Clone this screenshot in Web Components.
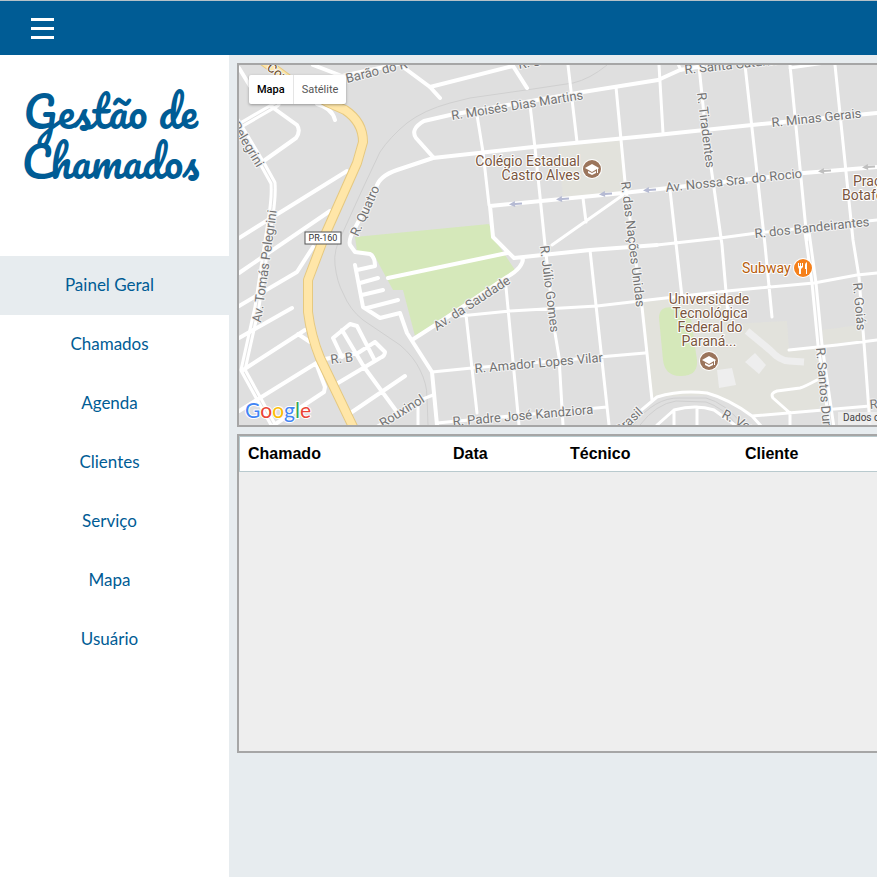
<!DOCTYPE html>
<html lang="pt-BR">
<head>
<meta charset="utf-8">
<title>Gestão de Chamados</title>
<style>
  html, body { margin: 0; height: 100%; }
  body { background: #e7ecef; font-family: Lato, "Liberation Sans", sans-serif; color: #005c95; }
</style>
</head>
<body>
<app-shell>
  <top-bar slot="bar"></top-bar>
  <side-menu slot="menu">
    <menu-item active>Painel Geral</menu-item>
    <menu-item>Chamados</menu-item>
    <menu-item>Agenda</menu-item>
    <menu-item>Clientes</menu-item>
    <menu-item>Serviço</menu-item>
    <menu-item>Mapa</menu-item>
    <menu-item>Usuário</menu-item>
  </side-menu>
  <street-map></street-map>
  <ticket-table></ticket-table>
</app-shell>

<template id="t-shell">
  <style>
    :host { display: grid; grid-template: auto 1fr / 229px minmax(0, 1fr); min-height: 100vh; }
    header { grid-column: 1 / -1; }
    main { display: flex; flex-direction: column; gap: 7px; padding: 8px 0 0 8px; }
  </style>
  <header><slot name="bar"></slot></header>
  <slot name="menu"></slot>
  <main><slot></slot></main>
</template>

<template id="t-bar">
  <style>
    :host { display: flex; align-items: center; height: 54px; padding-left: 31px; background: #005c95; border-top: 1px solid #b4c1c8; }
    button { display: flex; padding: 0; border: 0; background: none; cursor: pointer; }
  </style>
  <button type="button" aria-label="Abrir menu">
    <svg width="23" height="21" viewBox="0 0 23 21" fill="#fff"><path d="M0 0h23v3H0zM0 9h23v3H0zM0 18h23v3H0z"/></svg>
  </button>
</template>

<template id="t-menu">
  <style>
    :host { display: block; background: #fff; }
    h1 { box-sizing: border-box; height: 201px; margin: 0; padding: 31px 8px 0 0; text-align: center;
         font: 400 42px/50px Pacifico, Lato, cursive; color: #005c95; }
    nav { display: flex; flex-direction: column; }
  </style>
  <h1>Gestão de<br>Chamados</h1>
  <nav><slot></slot></nav>
</template>

<template id="t-item">
  <style>
    :host { display: block; }
    :host([active]) { background: #e7ecef; }
    a { display: block; padding: 0 10px 1px 0; text-align: center; text-decoration: none; color: #005c95; font-size: 17px; line-height: 58px; }
  </style>
  <a href="#"><slot></slot></a>
</template>

<template id="t-table">
  <style>
    :host { display: block; height: 315px; overflow: hidden; background: #eee; border: 2px solid #a6a6a6; border-right: 0; }
    table { width: 100%; border-collapse: collapse; table-layout: fixed; background: #fff; border: 1px solid #b9cace; border-right: 0; }
    th { padding: 8px; text-align: left; font: 700 16px/18px "Liberation Sans", Arial, sans-serif; color: #000; }
    .ticket { width: 189px; } .date { width: 101px; } .tech { width: 159px; }
  </style>
  <table>
    <thead><tr>
      <th class="ticket" scope="col">Chamado</th><th class="date" scope="col">Data</th>
      <th class="tech" scope="col">Técnico</th><th scope="col">Cliente</th>
    </tr></thead>
  </table>
</template>

<template id="t-map">
  <style>
    :host { display: block; position: relative; overflow: hidden; height: 360px; background: #dfdfdf; border: 2px solid #a6a6a6; border-right: 0; font-family: Roboto, sans-serif; }
    svg.map { display: block; width: 100%; height: 100%; }
    .switch { position: absolute; left: 10px; top: 10px; display: flex; background: #fff; border-radius: 2px; box-shadow: 0 1px 3px #0005; }
    button { height: 29px; padding: 0 8px; border: 0; background: none; font: 11px/29px Roboto, sans-serif; color: #565656; }
    button.on { font-weight: 500; color: #000; }
    button + button { border-left: 1px solid #e5e5e5; }
    .road { fill: none; stroke: #fff; stroke-width: 3; stroke-linejoin: round; stroke-linecap: round; }
    .wide { stroke-width: 4; }
    .avenue { stroke-width: 7; }
    .median { fill: none; stroke: #e2e2e2; stroke-width: 1; }
    .rail { fill: none; stroke: #d0d0d0; stroke-width: 1; }
    text { font-size: 13px; fill: #737373; stroke: #f3f3f3; stroke-width: 2px; stroke-linejoin: round; paint-order: stroke; }
    .poi text { font-size: 14px; fill: #7a5640; stroke: #fff; }
    .poi .food { fill: #b85d0c; }
    .logo text { font: 400 21px Lato, sans-serif; stroke: #fff; stroke-width: 2px; }
  </style>
  <svg class="map" role="img" aria-label="Mapa de ruas">
    <defs>
      <g id="cap"><circle r="10" fill="#fff"/><circle r="9" fill="#9b755c"/><path fill="#fff" d="M-7-1 0-5 7-1 6 0V4H5V0L0 3zM-4 2 0 4 4 2v2L0 6-4 4z"/></g>
      <path id="arrow" d="M-6 0 0-3v2h7v2H0v2z"/>
    </defs>
    <g transform="translate(-239 -65)">
      <g fill="#e2e2dc">
        <path d="M558 147 621 140 627 192 563 197z"/>
        <path d="M642 302 727 293 730 324 787 321 789 350 819 348 825 408 755 415 715 395 652 397z"/>
        <path d="M822 330 860 325 863 340 824 345z"/>
      </g>
      <path fill="#d5e8ba" d="M355 237 489 224 495 240 515 270 415 336 403 290 393 290 373 253 357 251z"/>
      <path fill="#d5e8ba" d="M659 318C659 307 668 306 675 308L690 312 697 360C698 373 690 376 680 376 669 376 664 369 663 360z"/>
      <g fill="#eee"><path d="M745 362 755 353 766 365 759 374zM717 370 732 368 736 385 719 388z"/><path fill="none" stroke="#eee" stroke-width="7" d="M747 331 770 350Q780 361 789 361L804 362"/></g>
      <path class="rail" d="M607 65Q590 79 573 83L533 89 470 98 450 103Q424 110 407 123 390 137 380 152L363 188 343 232Q333 250 335 265 337 282 343 293 350 310 363 320L400 345Q414 357 420 370 427 384 427 397L428 425"/>
      <path class="rail" d="M640 425Q656 404 676 401L706 402Q722 407 737 425M633 425Q655 397 680 398L706 398Q725 403 743 425"/>
      <path class="road avenue" d="M236 120 263 165 273 183Q274 195 271 215L257 307 243 370 276 430M239 126 277 104"/>
      <path class="median" d="M236 120 263 165 273 183Q274 195 271 215L257 307 243 370 276 430M239 126 277 104"/>
      <path class="road avenue" d="M807 232 814 283 820 345 832 428"/>
      <path class="median" d="M807 232 814 283 820 345 832 428"/>
      <path class="road wide" d="M239 68 250 86M313 65 342 76 403 63M403 67 430 87 440 98M430 87 513 66 527 88M272 107 297 125Q301 131 296 138L265 160M317 104Q332 108 335 120M347 171 239 238M330 211 239 273M313 247Q306 258 297 272L239 306M292 308 239 338M305 330 243 370M298 334 310 342M318 362 239 411M316 363 325 387 324 392 274 425
        M433 157 416 138Q410 129 424 121L450 115 583 92 658 80 680 70 720 63M877 113 752 125 657 135 533 147 433 158 397 170Q379 176 376 188L355 228Q348 240 350 245L355 252 370 254Q375 257 375 266L357 270
        M355 265 363 307 380 318 400 313 407 333 432 372 437 425M360 283 378 278M362 295 383 290M367 308 398 300M388 278 507 253M412 340 440 322 507 277Q523 268 523 258
        M325 359 358 353 375 342M342 357 333 338 350 324 357 326 375 361M342 330 364 367 397 412M375 342 385 352Q385 356 380 358L338 383M405 376 352 412
        M490 206 623 193 804 173 877 167M490 206 493 237 514 258 590 250 657 245"/>
      <path class="road" d="M659 65 663 133M477 115 483 152 489 205M657 245 720 238 757 233 877 220M530 105 535 148 545 245 555 333 559 357 563 425M568 65 577 142M616 87 625 182 642 307 652 400
        M623 195 552 245M583 198 586 222M506 287 519 425M466 315 477 413M590 250 609 425M460 316 510 311 597 306 657 299 727 291 814 283 857 275 877 273M432 372 472 368 645 353M437 423 607 407M418 407V425M376 427 423 399 433 395
        M699 66 705 125 714 188 722 245 728 315M745 65 765 245 772 317M790 65 807 240M835 65 853 240 859 277 864 343 870 425M670 190 682 297M790 68 825 63M676 60 681 70
        M789 350 837 345 877 340M817 380Q804 387 800 388L777 391Q770 393 773 398L790 413V425M752 416 870 406M620 428 657 397Q680 390 707 393 729 399 752 416L762 427M657 425 674 410Q696 404 714 410L735 425M674 410V425M697 407V425"/>
      <g fill="none" stroke-linejoin="round"><path stroke="#e6c980" stroke-width="10" d="M262 60 292 82 327 102 345 110Q363 122 363 142L357 163 325 235 308 280V312Q311 336 320 358L355 431"/><path stroke="#ffe6a8" stroke-width="8" d="M262 60 292 82 327 102 345 110Q363 122 363 142L357 163 325 235 308 280V312Q311 336 320 358L355 431"/></g>
      <g fill="#b5bad3"><use href="#arrow" transform="translate(515 204) rotate(-5)"/><use href="#arrow" transform="translate(562 199) rotate(-5)"/><use href="#arrow" transform="translate(605 194) rotate(-5)"/><use href="#arrow" transform="translate(649 190) rotate(-5)"/></g>
      <g fill="#bfbfbf"><use href="#arrow" transform="translate(824 171) rotate(-5)"/><use href="#arrow" transform="translate(868 167) rotate(-5)"/></g>
      <text style="fill:#6e4a1d" transform="translate(266 69) rotate(38)">Cor</text>
      <text transform="translate(347 83) rotate(-14)">Barão do R</text>
      <text transform="translate(519 69) rotate(-10)">R. S</text>
      <text transform="translate(452 120) rotate(-9)">R. Moisés Dias Martins</text>
      <text transform="translate(685 74) rotate(-6)">R. Santa Catarina</text>
      <text transform="translate(772 127) rotate(-6)">R. Minas Gerais</text>
      <text transform="translate(666 192) rotate(-6)">Av. Nossa Sra. do Rocio</text>
      <text transform="translate(755 238) rotate(-6)">R. dos Bandeirantes</text>
      <text transform="translate(697 93) rotate(83)">R. Tiradentes</text>
      <text transform="translate(621 182) rotate(83)">R. das Nações Unidas</text>
      <text transform="translate(540 246) rotate(83)">R. Júlio Gomes</text>
      <text transform="translate(358 237) rotate(-66)">R. Quatro</text>
      <text transform="translate(261 323) rotate(-82)">Av. Tomás Pelegrini</text>
      <text transform="translate(231 125) rotate(59)">Pelegrini</text>
      <text transform="translate(437 331) rotate(-33)">Av. da Saudade</text>
      <text transform="translate(475 373) rotate(-5)">R. Amador Lopes Vilar</text>
      <text transform="translate(453 426) rotate(-5)">R. Padre José Kandziora</text>
      <text transform="translate(383 428) rotate(-32)">Rouxinol</text>
      <text transform="translate(620 435) rotate(-43)">Brasil</text>
      <text transform="translate(721 417) rotate(28)">R. Ver</text>
      <text transform="translate(816 348) rotate(85)">R. Santos Dumont</text>
      <text transform="translate(853 283) rotate(85)">R. Goiás</text>
      <text transform="translate(870 409) rotate(-5)">R.</text>
      <text transform="translate(331 364) rotate(-7)">R. B</text>
      <rect x="305" y="232" width="36" height="12" fill="#fff" stroke="#555"/>
      <text x="323" y="241" text-anchor="middle" style="font-size:9px;fill:#333;stroke:none">PR-160</text>
      <g class="poi">
        <g text-anchor="end"><text x="580" y="166">Colégio Estadual</text><text x="580" y="180">Castro Alves</text></g>
        <g text-anchor="middle"><text x="709" y="304">Universidade</text><text x="710" y="318">Tecnológica</text><text x="710" y="332">Federal do</text><text x="709" y="346">Paraná...</text></g>
        <text class="food" x="742" y="273">Subway</text>
        <text x="853" y="186">Praça</text><text x="842" y="200">Botafogo</text>
      </g>
      <use href="#cap" x="592" y="169"/><use href="#cap" x="709" y="361"/>
      <g transform="translate(803 268)"><circle r="10" fill="#fff"/><circle r="9" fill="#f5801b"/><path fill="#fff" d="M-5-5h1v3h1v-3h1v3h1v-3h1v4l-2 2v5h-2V1L-5-1zM2-3Q2-5 4-6V6H3V1H2z"/></g>
      <g class="logo"><text x="245" y="418"><tspan fill="#4285f4">G</tspan><tspan fill="#ea4335">o</tspan><tspan fill="#fbbc05">o</tspan><tspan fill="#4285f4">g</tspan><tspan fill="#34a853">l</tspan><tspan fill="#ea4335">e</tspan></text></g>
      <rect x="838" y="412" width="400" height="13" fill="#f0f0f0" opacity=".8"/>
      <text x="843" y="421" style="font-size:10px;fill:#444;stroke:none">Dados cartográficos</text>
    </g>
  </svg>
  <div class="switch"><button type="button" class="on">Mapa</button><button type="button">Satélite</button></div>
</template>

<script>
  const define = (name, id) => customElements.define(name, class extends HTMLElement {
    constructor() {
      super();
      this.attachShadow({ mode: 'open' }).append(document.getElementById(id).content.cloneNode(true));
    }
  });
  define('app-shell', 't-shell');
  define('top-bar', 't-bar');
  define('side-menu', 't-menu');
  define('menu-item', 't-item');
  define('street-map', 't-map');
  define('ticket-table', 't-table');
</script>
</body>
</html>
